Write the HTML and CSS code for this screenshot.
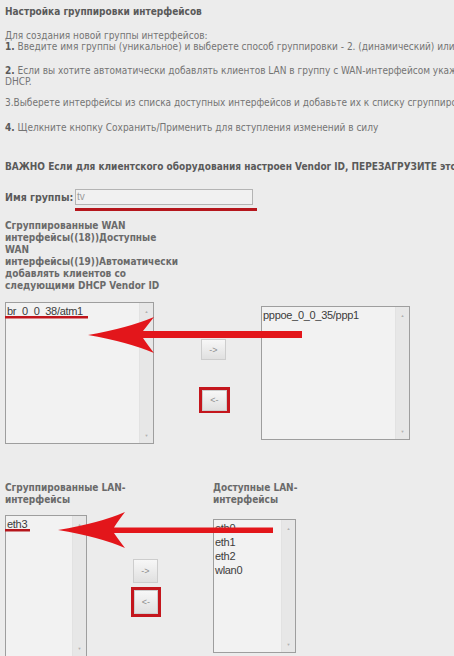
FILE: index.html
```html
<!DOCTYPE html>
<html lang="ru">
<head>
<meta charset="utf-8">
<title>Настройка группировки интерфейсов</title>
<link rel="stylesheet" href="styles.css">
</head>
<body>
<div class="page">
  <div class="title">Настройка группировки интерфейсов</div>
  <div class="para p1">Для создания новой группы интерфейсов:<br><b>1.</b> Введите имя группы (уникальное) и выберете способ группировки - 2. (динамический) или</div>
  <div class="para p2"><b>2.</b> Если вы хотите автоматически добавлять клиентов LAN в группу с WAN-интерфейсом укажите<br>DHCP.</div>
  <div class="para p3">3.Выберете интерфейсы из списка доступных интерфейсов и добавьте их к списку сгруппированных</div>
  <div class="para p4"><b>4.</b> Щелкните кнопку Сохранить/Применить для вступления изменений в силу</div>
  <div class="para important">ВАЖНО Если для клиентского оборудования настроен Vendor ID, ПЕРЕЗАГРУЗИТЕ это</div>
  <div class="name-row">
    <span class="name-label">Имя группы:</span>
    <span class="name-input">tv</span>
  </div>
  <div class="wan-label">Сгруппированные WAN<br>интерфейсы((18))Доступные<br>WAN<br>интерфейсы((19))Автоматически<br>добавлять клиентов со<br>следующими DHCP Vendor ID</div>

  <div class="wan-row">
    <div class="listbox lb-wan-left">
      <div class="items"><div class="item">br_0_0_38/atm1</div></div>
      <div class="scroll"><span class="up">▲</span><span class="down">▼</span></div>
    </div>
    <div class="btns wan-btns">
      <span class="btn btn-right">-&gt;</span>
      <span class="mark"><span class="btn">&lt;-</span></span>
    </div>
    <div class="listbox lb-wan-right">
      <div class="items"><div class="item">pppoe_0_0_35/ppp1</div></div>
      <div class="scroll"><span class="up">▲</span><span class="down">▼</span></div>
    </div>
  </div>

  <div class="lan-head">
    <div class="lan-h1">Сгруппированные LAN-<br>интерфейсы</div>
    <div class="lan-h2">Доступные LAN-<br>интерфейсы</div>
  </div>
  <div class="lan-row">
    <div class="listbox lb-lan-left">
      <div class="items"><div class="item">eth3</div></div>
      <div class="scroll"><span class="up">▲</span><span class="down">▼</span></div>
    </div>
    <div class="btns lan-btns">
      <span class="btn btn-right lan-btn">-&gt;</span>
      <span class="mark mark-lan"><span class="btn lan-btn">&lt;-</span></span>
    </div>
    <div class="listbox lb-lan-right">
      <div class="items">
        <div class="item">eth0</div>
        <div class="item">eth1</div>
        <div class="item">eth2</div>
        <div class="item">wlan0</div>
      </div>
      <div class="scroll"><span class="up">▲</span><span class="down">▼</span></div>
    </div>
  </div>
</div>

<svg class="annot" width="454" height="656" viewBox="0 0 454 656" xmlns="http://www.w3.org/2000/svg">
  <rect x="75" y="208" width="182" height="3" fill="#b5161c"/>
  <rect x="5" y="316" width="83" height="2.5" fill="#c0161c"/>
  <rect x="5" y="529" width="25" height="2.5" fill="#b5161c"/>
  <path d="M88,335 Q128,328 154,317 Q147,326 143,331 L302,331 L302,338 L143,338 Q147,344 154,353 Q128,342 88,335 Z" fill="#e3161b"/>
  <path d="M58,530 Q100,523 125,512 Q118,521 114,527.5 L273,527.5 L273,533 L114,533 Q118,539 125,548 Q100,537 58,530 Z" fill="#e3161b"/>
</svg>
</body>
</html>
```

FILE: styles.css
```css
html, body {
  margin: 0;
  padding: 0;
}
body {
  width: 454px;
  height: 656px;
  overflow: hidden;
  position: relative;
  background: #ececec;
  font-family: "DejaVu Sans Condensed", "DejaVu Sans", sans-serif;
  font-stretch: condensed;
  color: #747474;
  font-size: 10px;
}
.page {
  padding: 0 0 0 5px;
  white-space: nowrap;
  overflow: hidden;
}
.title {
  margin-top: 6px;
  line-height: 12px;
  font-weight: bold;
  color: #5a5a5a;
  font-size: 10px;
}
.para {
  line-height: 11px;
}
.para b {
  color: #5a5a5a;
}
.p1 { margin-top: 12px; }
.p2 { margin-top: 13px; }
.p3 { margin-top: 10px; }
.p4 { margin-top: 14px; }
.important {
  margin-top: 28px;
  font-weight: bold;
  color: #5a5a5a;
  font-size: 10px;
}
.name-row {
  margin-top: 17px;
  display: flex;
  align-items: center;
  height: 16px;
}
.name-label {
  font-weight: bold;
  color: #5a5a5a;
  width: 70px;
  font-size: 10.5px;
}
.name-input {
  box-sizing: border-box;
  width: 178px;
  height: 16px;
  border: 1px solid #b4b4b4;
  background: #f1f1f1;
  font-family: "Liberation Sans", Arial, sans-serif;
  font-size: 10px;
  line-height: 14px;
  color: #9a9a9a;
  padding-left: 1px;
}
.wan-label {
  margin-top: 15px;
  line-height: 12px;
  font-weight: bold;
  color: #6a6a6a;
  font-size: 10px;
}
.wan-row {
  margin-top: 10px;
  display: flex;
  align-items: center;
  height: 142px;
}
.listbox {
  box-sizing: border-box;
  display: flex;
  border: 1px solid #9e9e9e;
  background: #f2f2f2;
  font-family: "Liberation Sans", Arial, sans-serif;
  font-size: 11px;
  color: #3c3c3c;
}
.items {
  flex: 1;
  padding-top: 1px;
  padding-left: 1px;
  letter-spacing: -0.3px;
}
.item {
  line-height: 14px;
}
.scroll {
  width: 13px;
  background: #e7e7e7;
  border-left: 1px solid #e2e2e2;
  display: flex;
  flex-direction: column;
  justify-content: space-between;
  align-items: center;
  color: #b0b0b0;
  font-size: 4px;
  padding: 6px 0 5px;
}
.lb-wan-left { width: 149px; height: 142px; }
.lb-wan-right { width: 149px; height: 134px; }
.lb-lan-left { width: 82px; height: 142px; }
.lb-lan-right { width: 83px; height: 134px; }

.btns {
  display: flex;
  flex-direction: column;
  align-items: flex-start;
}
.wan-btns {
  width: 107px;
  padding-left: 45px;
  box-sizing: border-box;
  margin-top: 6px;
}
.btn {
  box-sizing: border-box;
  display: flex;
  align-items: center;
  justify-content: center;
  width: 25px;
  height: 21px;
  border: 1px solid #cdcdcd;
  background: linear-gradient(#f7f7f7, #e0e0e0);
  color: #8e8e8e;
  font-family: "Liberation Sans", Arial, sans-serif;
  font-size: 9px;
}
.btn-right {
  margin-left: 2px;
}
.mark {
  margin-top: 27px;
  border: 3px solid #c4161d;
  width: 31px;
  height: 26px;
  box-sizing: border-box;
  display: flex;
  align-items: center;
  justify-content: center;
}
.lan-head {
  margin-top: 38px;
  display: flex;
  line-height: 12px;
  font-weight: bold;
  color: #6a6a6a;
  font-size: 10px;
}
.lan-h1 { width: 208px; }
.lan-row {
  margin-top: 9px;
  display: flex;
  align-items: center;
  height: 142px;
}
.lan-btns {
  width: 126px;
  padding-left: 44px;
  box-sizing: border-box;
  margin-top: 4px;
}
.lan-btn {
  width: 25px;
  height: 24px;
}
.mark-lan {
  margin-top: 4px;
  width: 30px;
  height: 30px;
}
.mark-lan .lan-btn { width: 24px; height: 24px; }
.annot {
  position: absolute;
  left: 0;
  top: 0;
  pointer-events: none;
}
```
